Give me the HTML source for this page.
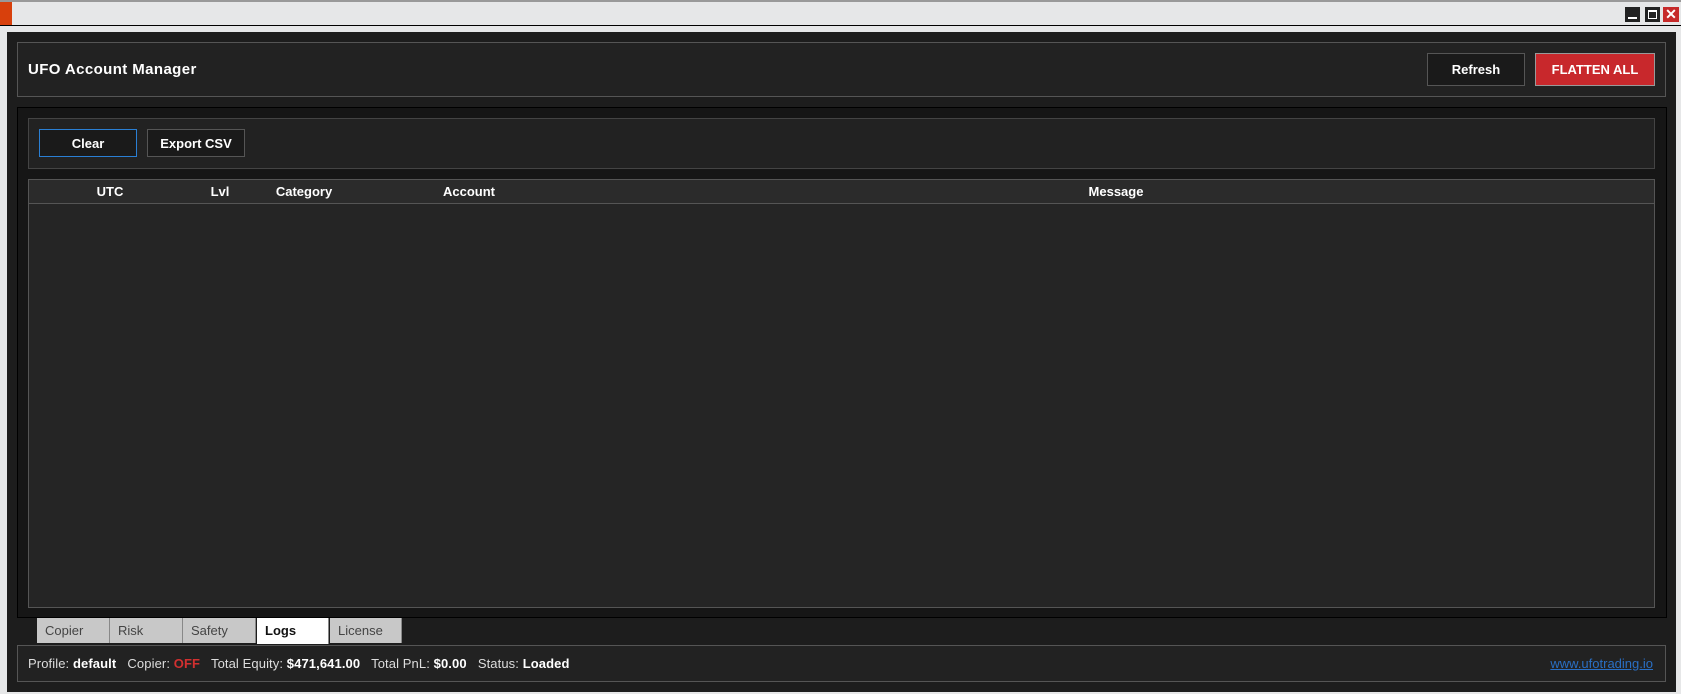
<!DOCTYPE html>
<html><head><meta charset="utf-8"><style>
*{margin:0;padding:0;box-sizing:border-box}
body{width:1681px;height:694px;background:#e6e7e8;position:relative;overflow:hidden;font-family:"Liberation Sans",Arial,sans-serif;color:#fff}
.a{position:absolute}
.btn{position:absolute;display:flex;align-items:center;justify-content:center;font-weight:bold;font-size:13px;color:#fff}
.th{position:absolute;top:0;height:24px;line-height:24px;font-weight:bold;font-size:13px;transform:translateX(-50%)}
.tab{position:absolute;top:618px;height:25px;background:#c8c8c8;color:#444;font-size:13px;line-height:25px;padding-left:8px;border-right:1px solid #888}
</style></head><body>
<div class="a" style="left:0;top:0;width:1681px;height:2px;background:#999"></div>
<div class="a" style="left:0;top:2px;width:12px;height:23px;background:#d8400c"></div>
<div class="a" style="left:0;top:25px;width:1681px;height:1px;background:#000"></div>
<div class="a" style="left:1625px;top:7px;width:15px;height:15px;background:#222"><div class="a" style="left:3px;top:10px;width:9px;height:2px;background:#fff"></div></div>
<div class="a" style="left:1645px;top:7px;width:15px;height:15px;background:#222"><div class="a" style="left:3px;top:3px;width:9px;height:9px;border:1px solid #fff;border-top-width:2px"></div></div>
<div class="a" style="left:1663px;top:7px;width:16px;height:15px;background:#c62a2a;color:#fff;font-size:14px;font-weight:bold;line-height:15px;text-align:center">✕</div>

<div class="a" style="left:7px;top:32px;width:1669px;height:660px;background:#1d1d1d"></div>
<div class="a" style="left:17px;top:42px;width:1649px;height:55px;background:#222;border:1px solid #555"></div>
<div class="a" style="left:28px;top:61px;font-size:15px;font-weight:bold;letter-spacing:0.4px">UFO Account Manager</div>
<div class="btn" style="left:1427px;top:53px;width:98px;height:33px;background:#1a1a1a;border:1px solid #555">Refresh</div>
<div class="btn" style="left:1535px;top:53px;width:120px;height:33px;background:#c8282c;border:1px solid #999">FLATTEN ALL</div>

<div class="a" style="left:17px;top:107px;width:1650px;height:511px;background:#161616;border:1px solid #000"></div>
<div class="a" style="left:28px;top:118px;width:1627px;height:51px;background:#222;border:1px solid #444"></div>
<div class="btn" style="left:39px;top:129px;width:98px;height:28px;background:#1a1a1a;border:1px solid #2a7fd4">Clear</div>
<div class="btn" style="left:147px;top:129px;width:98px;height:28px;background:#1a1a1a;border:1px solid #555">Export CSV</div>

<div class="a" style="left:28px;top:179px;width:1627px;height:429px;background:#252525;border:1px solid #555">
<div class="a" style="left:0;top:0;width:100%;height:24px;background:#2b2b2b;border-bottom:1px solid #555">
<div class="th" style="left:81px">UTC</div>
<div class="th" style="left:191px">Lvl</div>
<div class="th" style="left:275px">Category</div>
<div class="th" style="left:440px">Account</div>
<div class="th" style="left:1087px">Message</div>
</div></div>

<div class="tab" style="left:37px;width:73px">Copier</div>
<div class="tab" style="left:110px;width:73px">Risk</div>
<div class="tab" style="left:183px;width:73px">Safety</div>
<div class="tab" style="left:257px;width:72px;background:#fff;color:#111;font-weight:bold;height:26px">Logs</div>
<div class="tab" style="left:330px;width:72px">License</div>

<div class="a" style="left:17px;top:645px;width:1649px;height:37px;background:#222;border:1px solid #555"></div>
<div class="a" style="left:28px;top:656px;font-size:13px;color:#ddd;white-space:pre;letter-spacing:0.1px">Profile: <b style="color:#fff">default</b>   Copier: <b style="color:#d23030">OFF</b>   Total Equity: <b style="color:#fff">$471,641.00</b>   Total PnL: <b style="color:#fff">$0.00</b>   Status: <b style="color:#fff">Loaded</b></div>
<div class="a" style="left:1541px;top:656px;width:112px;text-align:right;font-size:13px;color:#2a6fc4;text-decoration:underline;white-space:nowrap">www.ufotrading.io</div>
</body></html>
